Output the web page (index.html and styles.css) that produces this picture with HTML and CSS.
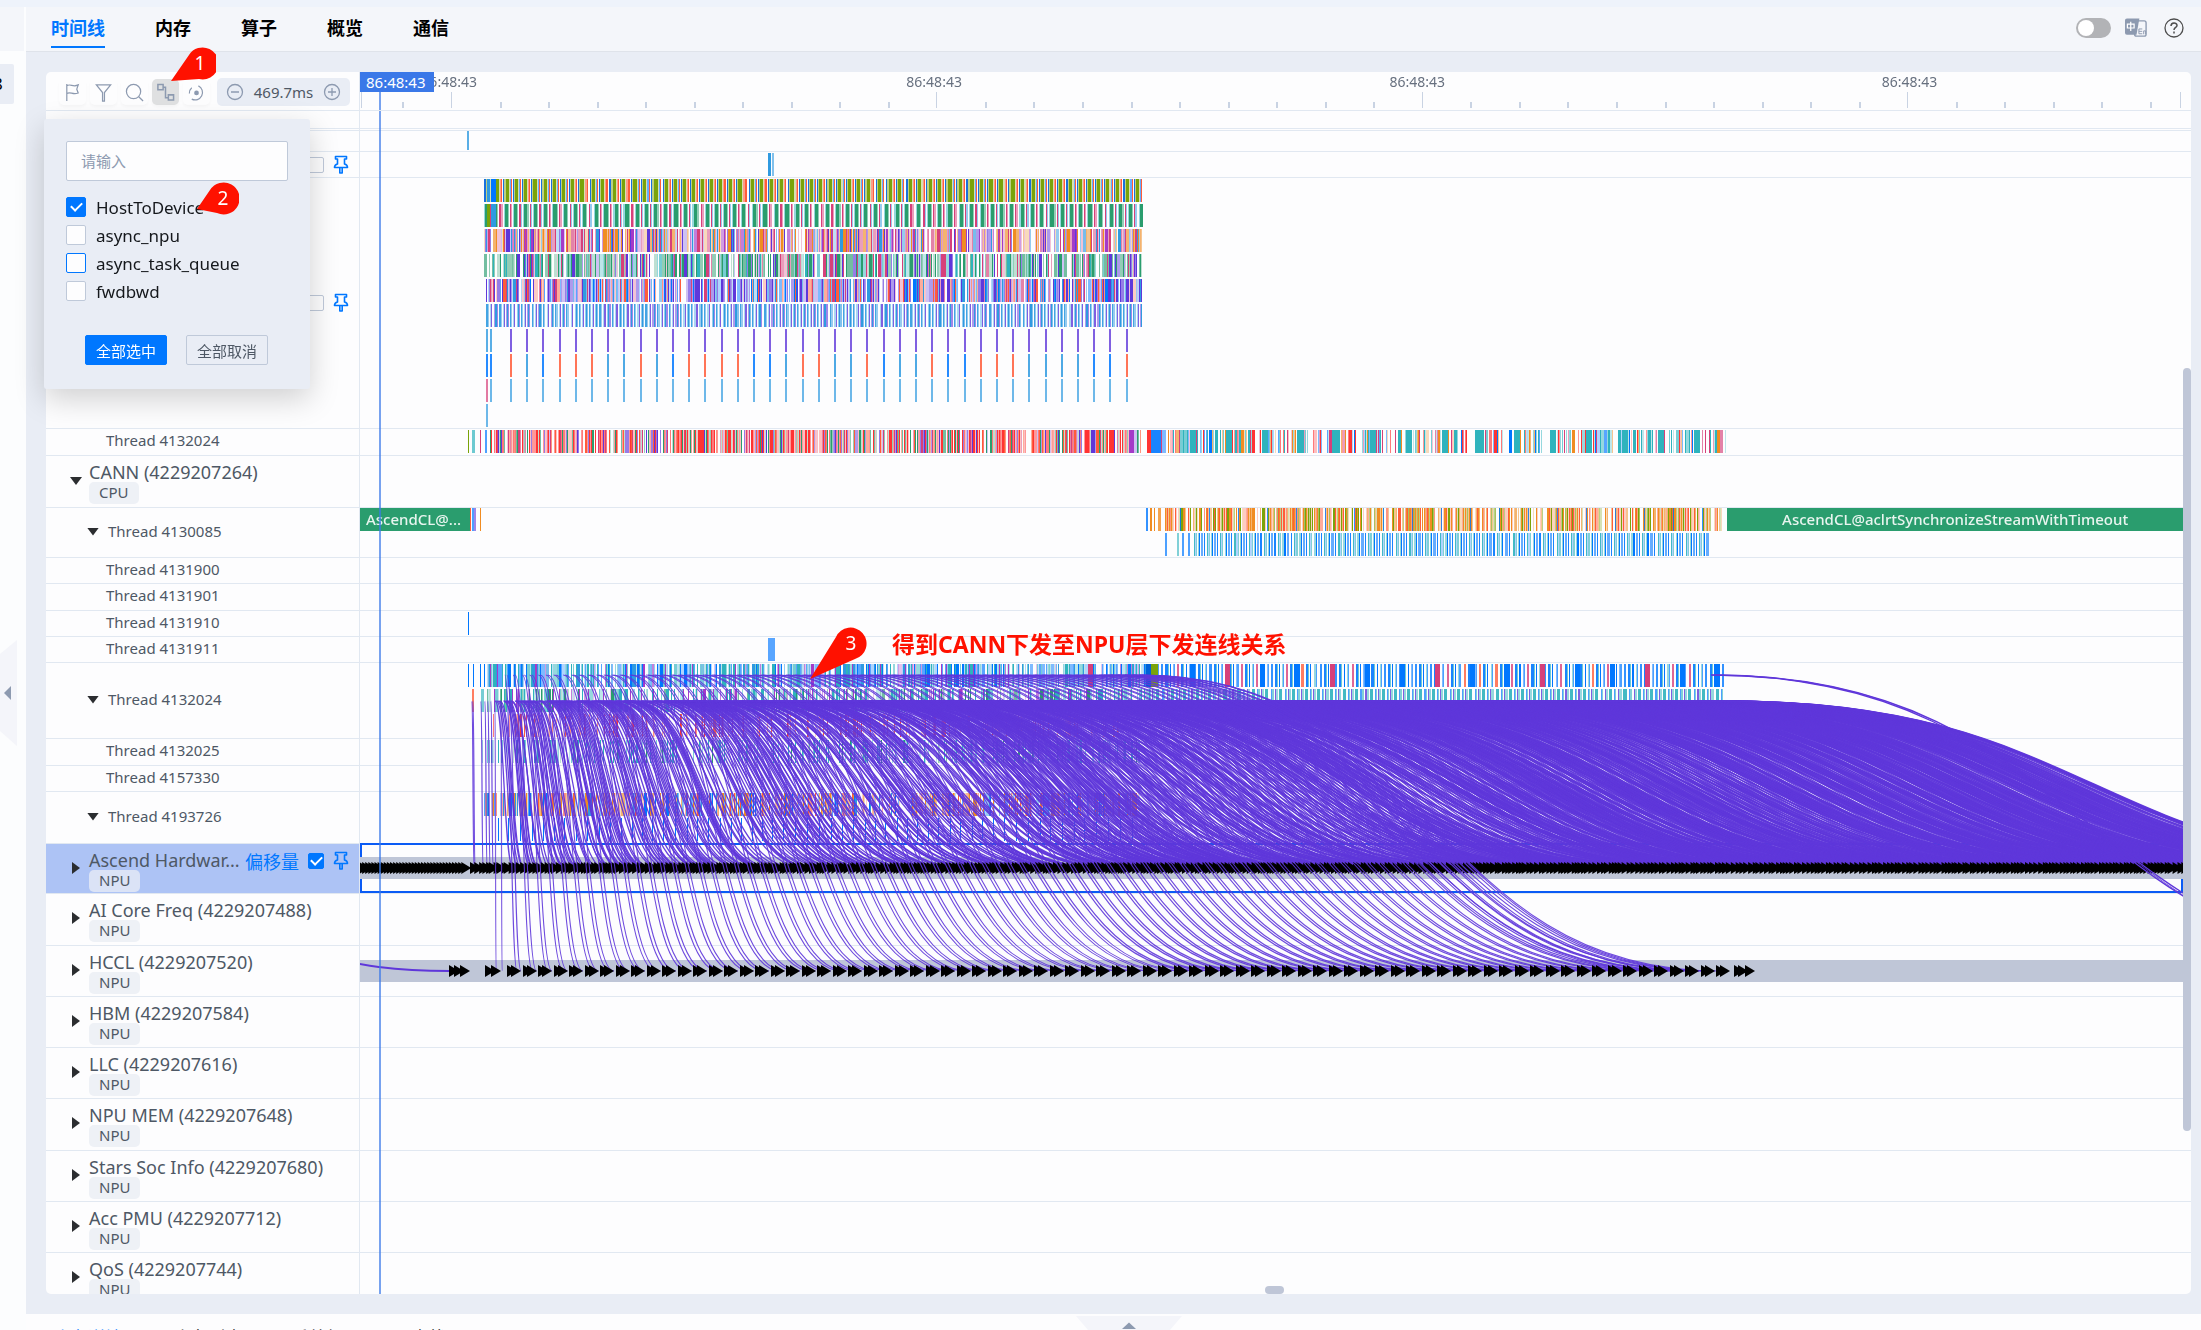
FILE: index.html
```html
<!DOCTYPE html>
<html lang="zh-CN">
<head>
<meta charset="utf-8">
<title>时间线</title>
<link rel="stylesheet" href="styles.css">
</head>
<body>
<svg width="0" height="0" class="defs" aria-hidden="true">
  <symbol id="pin" viewBox="0 0 16 20"><path d="M2.500 1.500h11v2.500h-2v5c2 .5 3 1.500 3 3.500h-13c0-2 1-3 3-3.500v-5h-2zM6.800 12.500h2.400v5.500h-2.400z" fill="none" stroke="currentColor" stroke-width="1.600" stroke-linejoin="round"/></symbol>
</svg>
<div class="app">
  <div class="strip"></div>
  <div class="shell">
    <aside class="rail">
      <div class="rail-head"></div>
      <div class="rail-item">8</div>
      <button class="rail-toggle" aria-label="collapse"><svg viewBox="0 0 17 106"><path d="M17 0v106L0 91V14z" fill="#f4f5fa"/><path d="M4 53l7-7v14z" fill="#8d9ab0"/></svg></button>
    </aside>
    <main class="main">
      <header class="topbar">
        <nav class="tabs">
          <a href="#" class="tab active">时间线</a>
          <a href="#" class="tab">内存</a>
          <a href="#" class="tab">算子</a>
          <a href="#" class="tab">概览</a>
          <a href="#" class="tab">通信</a>
        </nav>
        <div class="tools">
          <input type="checkbox" class="switch" aria-label="theme">
          <button class="icon-btn lang" aria-label="language"><svg viewBox="0 0 24 20"><rect x="10" y="2.500" width="12" height="16" rx="2" fill="#f4f6fa" stroke="#8d9ab0" stroke-width="1.400"/><path d="M2 0h13l-3 17H2a2 2 0 0 1-2-2V2a2 2 0 0 1 2-2z" fill="#8d9ab0"/><path d="M2.500 6h7v4h-7zM6 3.500v9.500" fill="none" stroke="#fff" stroke-width="1.300"/><path d="M18 11h-3.500v5H18M14.500 13.500H18M19.500 16.500v-3.500h2v3.500" fill="none" stroke="#8d9ab0"/></svg></button>
          <button class="icon-btn help" aria-label="help"><svg viewBox="0 0 20 20"><circle cx="10" cy="10" r="9" fill="none" stroke="#4e4e4e" stroke-width="1.300"/><path d="M7 8c0-4 6-4 6-.5 0 2-3 2-3 4.500M10 13.500v2" fill="none" stroke="#4e4e4e" stroke-width="1.500"/></svg></button>
        </div>
      </header>
      <section class="stage">
        <div class="panel">
          <div class="panel-head">
            <div class="toolbar">
              <button class="tool" aria-label="flag"><svg viewBox="0 0 20 20"><path d="M4 1v18M4 3c4-3 6 2 12-1l-1.500 4.500 1.500 4c-6 2.500-8-2-12 .5"/></svg></button>
              <button class="tool" aria-label="filter"><svg viewBox="0 0 20 20"><path d="M2.500 2h15L11 10v9H9v-9z"/></svg></button>
              <button class="tool" aria-label="search"><svg viewBox="0 0 20 20"><circle cx="9" cy="9" r="7.500"/><path d="M14.500 14.500l4.500 4.500"/></svg></button>
              <button class="tool on" aria-label="links"><svg viewBox="0 0 20 20"><path d="M2 1.500h5.500V7H2zM13 12.500h5.500V18H13zM7.500 4.500H10v11h3" stroke-width="1.600"/></svg></button>
              <button class="tool" aria-label="reset"><svg viewBox="0 0 20 20"><path d="M12 3a7.500 7.500 0 1 1-7 14M2.500 11A7.500 7.500 0 0 1 5 5"/><circle cx="10" cy="10.500" r="2.500" fill="#8d9ab0" stroke="none"/></svg></button>
              <div class="zoom">
                <button aria-label="zoom out"><svg viewBox="0 0 18 18"><circle cx="9" cy="9" r="7.500"/><path d="M5 9h8"/></svg></button>
                <span>469.7ms</span>
                <button aria-label="zoom in"><svg viewBox="0 0 18 18"><circle cx="9" cy="9" r="7.500"/><path d="M5 9h8M9 5v8"/></svg></button>
              </div>
            </div>
            <div class="ruler">
              <canvas id="ruler"></canvas>
              <span class="time t1">86:48:43</span>
              <span class="time t2">86:48:43</span>
              <span class="time t3">86:48:43</span>
              <span class="time t4">86:48:43</span>
              <span class="now">86:48:43</span>
            </div>
          </div>
          <div class="rows">
            <div class="row h18"><div class="cell"></div></div>
            <div class="row h2"><div class="cell"></div></div>
            <div class="row h21"><div class="cell"></div></div>
            <div class="row h26"><div class="cell"><div class="acts"><input type="checkbox" aria-label="offset"><button class="pin" aria-label="pin"><svg><use href="#pin"/></svg></button></div></div></div>
            <div class="row h251"><div class="cell"><div class="acts"><input type="checkbox" aria-label="offset"><button class="pin" aria-label="pin"><svg><use href="#pin"/></svg></button></div></div></div>
            <div class="row h27"><div class="cell thread">Thread 4132024</div></div>
            <div class="row h52"><div class="cell group"><i class="down"></i><div><div class="name">CANN (4229207264)</div><span class="tag">CPU</span></div></div></div>
            <div class="row h50"><div class="cell thread"><i class="down"></i>Thread 4130085</div></div>
            <div class="row h26"><div class="cell thread">Thread 4131900</div></div>
            <div class="row h27"><div class="cell thread">Thread 4131901</div></div>
            <div class="row h26"><div class="cell thread">Thread 4131910</div></div>
            <div class="row h26"><div class="cell thread">Thread 4131911</div></div>
            <div class="row h76"><div class="cell thread"><i class="down"></i>Thread 4132024</div></div>
            <div class="row h27"><div class="cell thread">Thread 4132025</div></div>
            <div class="row h26"><div class="cell thread">Thread 4157330</div></div>
            <div class="row h52"><div class="cell thread"><i class="down"></i>Thread 4193726</div></div>
            <div class="row h50 selected"><div class="cell group"><i class="right"></i><div><div class="name">Ascend Hardwar...</div><span class="tag">NPU</span></div><div class="acts"><a href="#" class="offset">偏移量</a><input type="checkbox" checked aria-label="offset"><button class="pin" aria-label="pin"><svg><use href="#pin"/></svg></button></div></div></div>
            <div class="row h52"><div class="cell group"><i class="right"></i><div><div class="name">AI Core Freq (4229207488)</div><span class="tag">NPU</span></div></div></div>
            <div class="row h51"><div class="cell group"><i class="right"></i><div><div class="name">HCCL (4229207520)</div><span class="tag">NPU</span></div></div></div>
            <div class="row h51"><div class="cell group"><i class="right"></i><div><div class="name">HBM (4229207584)</div><span class="tag">NPU</span></div></div></div>
            <div class="row h51"><div class="cell group"><i class="right"></i><div><div class="name">LLC (4229207616)</div><span class="tag">NPU</span></div></div></div>
            <div class="row h52"><div class="cell group"><i class="right"></i><div><div class="name">NPU MEM (4229207648)</div><span class="tag">NPU</span></div></div></div>
            <div class="row h51"><div class="cell group"><i class="right"></i><div><div class="name">Stars Soc Info (4229207680)</div><span class="tag">NPU</span></div></div></div>
            <div class="row h51"><div class="cell group"><i class="right"></i><div><div class="name">Acc PMU (4229207712)</div><span class="tag">NPU</span></div></div></div>
            <div class="row h52"><div class="cell group"><i class="right"></i><div><div class="name">QoS (4229207744)</div><span class="tag">NPU</span></div></div></div>
            <div class="trace">
              <canvas id="trace"></canvas>
              <span class="slice first">AscendCL@...</span>
              <span class="slice sync">AscendCL@aclrtSynchronizeStreamWithTimeout</span>
              <div class="cursor"></div>
            </div>
            <div class="vbar"></div>
            <div class="hbar"></div>
          </div>
        </div>
        <form class="popup">
          <input type="text" class="search" placeholder="请输入" aria-label="请输入">
          <div class="opts">
            <label><input type="checkbox" checked>HostToDevice</label>
            <label><input type="checkbox">async_npu</label>
            <label><input type="checkbox" class="focus">async_task_queue</label>
            <label><input type="checkbox">fwdbwd</label>
          </div>
          <div class="btns"><button type="button" class="primary">全部选中</button><button type="button">全部取消</button></div>
        </form>
      </section>
      <footer class="bottom">
        <a href="#" class="active">选中详情</a><a href="#">选中列表</a><a href="#">系统视图</a><a href="#">查找</a>
        <button class="expand" aria-label="expand"><svg viewBox="0 0 106 14"><path d="M0 0h106l-12 14H12z" fill="#f4f5fa"/><path d="M53 6.500l7 6.500H46z" fill="#8d9ab0"/></svg></button>
      </footer>
    </main>
  </div>
  <div class="note n1"><svg viewBox="0 0 46 36"><path d="M1 34L19 8A16 16 0 1 1 29 32z" fill="#ff1100"/></svg><b>1</b></div>
  <div class="note n2"><svg viewBox="0 0 42 33"><path d="M0 27L13 8A16 16 0 1 1 20 31z" fill="#ff1100"/></svg><b>2</b></div>
  <div class="note n3"><svg viewBox="0 0 58 54"><path d="M1 52L27 10A16 16 0 1 1 46 32z" fill="#ff1100"/></svg><b>3</b></div>
  <div class="caption">得到CANN下发至NPU层下发连线关系</div>
</div>
<script src="trace.js"></script>
</body>
</html>
```
FILE: styles.css
```css
* { box-sizing: border-box; }
body { margin: 0; font-family: "Noto Sans", "Noto Sans CJK SC", sans-serif; font-size: 15px; color: #4e5865; }
button { padding: 0; border: 0; background: none; font: inherit; color: inherit; }
a { color: inherit; text-decoration: none; }
.defs { position: absolute; }
.app { position: relative; display: flex; flex-direction: column; height: 100vh; overflow: hidden; }
.strip { flex: none; height: 7px; background: #eef3fb; }
.shell { display: flex; flex: 1; min-height: 0; }

.rail { position: relative; flex: none; width: 26px; background: #fcfdfe; }
.rail-head { width: 24px; height: 44px; background: #f4f6fa; }
.rail-item { width: 14px; height: 40px; margin-top: 13px; border-radius: 0 2px 2px 0; background: #e9edf5; color: #000; line-height: 40px; font-size: 17px; text-indent: -7px; overflow: hidden; }
.rail-toggle { position: absolute; left: 0; top: 633px; width: 17px; height: 106px; }
.rail-toggle svg, .expand svg { display: block; width: 100%; height: 100%; }

.main { display: flex; flex-direction: column; flex: 1; min-width: 0; }
.topbar { display: flex; justify-content: space-between; flex: none; height: 45px; padding: 0 17px 0 25px; background: #f4f6fa; border-bottom: 1px solid #dfe3ea; }
.tabs { display: flex; gap: 50px; }
.tab { height: 41px; padding-top: 6px; color: #000; font-size: 18px; line-height: 30px; font-weight: 700; }
.tab.active { color: #0077ff; border-bottom: 2px solid #0077ff; }
.tools { display: flex; align-items: center; padding-bottom: 2px; }
.switch { appearance: none; width: 35px; height: 20px; margin: 0 14px 0 0; border-radius: 10px; background: #b2b3b6; }
.switch::before { content: ""; display: block; width: 16px; height: 16px; margin: 2px; border-radius: 50%; background: #fff; }
.icon-btn svg { display: block; height: 20px; }
.lang svg { width: 23px; }
.help { margin-left: 16px; }
.help svg { width: 20px; }

.stage { position: relative; flex: 1; min-height: 0; padding: 20px 10px 20px 20px; background: #e9edf5; }
.panel { display: flex; flex-direction: column; height: 100%; border-radius: 5px; background: #fdfdfe; overflow: hidden; }
.panel-head { display: flex; flex: none; height: 39px; padding-right: 8px; border-bottom: 1px solid #e1e8f1; }
.toolbar { display: flex; align-items: center; flex: none; gap: 4px; width: 314px; padding: 2px 9px 0 13px; border-right: 1px solid #e1e8f1; }
.toolbar svg { display: block; fill: none; stroke: #8d9ab0; stroke-width: 1.300; }
.tool { display: grid; place-items: center; width: 27px; height: 26px; border-radius: 5px; box-shadow: 0 2px 3px #00000008; }
.tool svg { width: 19px; height: 19px; }
.tool.on { background: #dfe0e1; }
.zoom { display: flex; align-items: center; justify-content: space-between; flex: 1; height: 28px; margin-left: 3px; padding: 0 9px; border-radius: 5px; background: #e9edf5; color: #4e5865; }
.zoom svg { width: 18px; height: 18px; }
.ruler { position: relative; flex: 1; }
.ruler canvas { position: absolute; left: 0; top: 0; }
.time { position: absolute; top: 0; line-height: 20px; font-size: 14px; color: #67707f; transform: translateX(-50%); }
.t1 { left: calc(5% - 2px); } .t2 { left: calc(31% + 9px); } .t3 { left: 58%; } .t4 { left: 85%; }
.now { position: absolute; left: 0; top: 0; width: 74px; height: 20px; background: #3a78e8; color: #fff; line-height: 20px; padding-left: 6px; }

.rows { position: relative; flex: 1; min-height: 0; overflow: hidden; }
.row { border-bottom: 1px solid #e1e8f1; }
.h2 { height: 2px; } .h18 { height: 18px; } .h21 { height: 21px; } .h26 { height: 26px; } .h27 { height: 27px; }
.h50 { height: 50px; } .h51 { height: 51px; } .h52 { height: 52px; } .h76 { height: 76px; } .h251 { height: 251px; }
.cell { position: relative; display: flex; align-items: center; width: 314px; height: 100%; border-right: 1px solid #e1e8f1; }
.thread { padding: 0 0 4px 60px; }
.thread .down { margin: 2px 9px 0 -19px; }
.group { align-items: flex-start; padding-left: 24px; }
.group > div:first-of-type { padding-top: 6px; }
.name { line-height: 20px; font-size: 18px; white-space: nowrap; }
.tag { display: block; width: fit-content; height: 22px; padding: 0 10px; border-radius: 5px; background: #eef1f6; line-height: 21px; }
.down { width: 12px; height: 8px; background: #2b2d30; clip-path: polygon(0 0, 100% 0, 50% 100%); }
.right { width: 8px; height: 12px; background: #2b2d30; clip-path: polygon(0 0, 100% 50%, 0 100%); }
.group .down { margin: 21px 7px 0 0; }
.group .right { flex: none; margin: 18px 9px 0 2px; }
.selected .cell { background: #adc3f5; }
.selected .tag { background: #dbe3f6; }
.acts { display: flex; align-items: center; gap: 9px; margin-left: auto; padding-right: 10px; color: #0077ff; }
.group .acts { height: 34px; }
.offset { color: #0077ff; font-size: 18px; }
.pin { width: 16px; height: 20px; }
.pin svg { display: block; width: 16px; height: 20px; }
input[type=checkbox]:not(.switch) { appearance: none; flex: none; width: 16px; height: 16px; margin: 0; border: 1px solid #bfc9d9; border-radius: 2px; background: #fdfdfe; }
input[type=checkbox]:not(.switch):checked { border-color: #0077ff; background: #0077ff; display: grid; place-items: center; }
input[type=checkbox]:not(.switch):checked::before { content: ""; width: 9px; height: 5px; margin-bottom: 3px; border: solid #fff; border-width: 0 0 2px 2px; rotate: -45deg; }

.trace { position: absolute; left: 314px; right: 8px; top: 0; bottom: 0; overflow: hidden; }
.trace canvas { position: absolute; left: 0; top: 0; }
.slice { position: absolute; top: 397px; height: 23px; line-height: 22px; color: #e8f5ef; font-weight: 500; text-align: center; white-space: nowrap; }
.first { left: 6px; }
.sync { left: 75%; right: 0; }
.cursor { position: absolute; left: 19px; top: 0; bottom: 0; width: 2px; background: #3a78e8b0; }
.panel-head .cursor-top { height: 18px; }
.vbar { position: absolute; right: 0; top: 257px; width: 8px; height: 763px; border-radius: 4px; background: #bfc6d7; }
.hbar { position: absolute; left: 57%; bottom: 0; width: 19px; height: 8px; margin-left: -4px; border-radius: 4px; background: #bfc6d7; }

.popup { position: absolute; left: 18px; top: 67px; width: 266px; height: 270px; padding: 22px; border-radius: 3px; background: #e9edf5; box-shadow: 0 10px 30px #0000002e; }
.search { display: block; width: 222px; height: 40px; padding: 0 14px; border: 1px solid #bfc9d9; border-radius: 2px; background: #fdfdfe; font: inherit; }
.search::placeholder { color: #8d9ab0; }
.opts { display: grid; grid-auto-rows: 28px; margin-top: 12px; }
.opts label { display: flex; align-items: center; gap: 10px; color: #15181c; font-size: 17px; }
.opts label input[type=checkbox] { width: 20px !important; height: 20px !important; }
.opts .focus { border-color: #0077ff !important; }
.btns { display: flex; gap: 19px; margin: 30px 0 0 19px; }
.btns button { width: 82px; height: 30px; border: 1px solid #bfc9d9; border-radius: 2px; }
.btns .primary { border-color: #0077ff; background: #0077ff; color: #fff; }

.bottom { position: relative; display: flex; gap: 48px; flex: none; height: 16px; padding: 13px 25px 0; background: #fdfdfe; color: #000; font-size: 18px; line-height: 22px; overflow: hidden; }
.bottom .active { color: #0077ff; }
.expand { position: absolute; left: 50%; bottom: 0; width: 106px; height: 14px; margin-left: -38px; }

.note { position: absolute; }
.note svg { display: block; width: 100%; height: 100%; }
.note b { position: absolute; right: 0; top: 0; width: 32px; line-height: 32px; text-align: center; color: #fff; font-size: 19px; font-weight: 400; }
.n1 { left: 170px; top: 47px; width: 46px; height: 36px; }
.n2 { left: 197px; top: 182px; width: 42px; height: 33px; }
.n3 { left: 809px; top: 627px; width: 58px; height: 54px; }
.caption { position: absolute; left: 892px; top: 627px; color: #ff1100; font-size: 23px; line-height: 34px; font-weight: 700; white-space: nowrap; }
```
FILE: trace.js
```js
const BLUE = '#0077ff', SKY = '#2f9ae0', CORAL = '#ff5c3a', OLIVE = '#7aa30a', GREEN = '#2a9d6e',
  PINK = '#d6407a', ORANGE = '#f08c22', VIOLET = '#5f37da', MAGENTA = '#a43bc8', TEAL = '#2fb3bd',
  RED = '#ff3333', NAVY = '#0060d8';
const WIDTH = 1823;
let seed = 7;
const rnd = () => (seed = (seed * 16807) % 2147483647) / 2147483647;
const pick = list => list[Math.floor(rnd() * list.length)];

function setup(id) {
  const canvas = document.getElementById(id);
  const box = canvas.parentElement;
  canvas.width = box.clientWidth;
  canvas.height = box.clientHeight;
  const ctx = canvas.getContext('2d');
  ctx.scale(box.clientWidth / WIDTH, 1);
  return ctx;
}

// Ruler ticks: a long one every ten short steps
const r = setup('ruler');
r.fillStyle = '#c9d3e3';
r.fillRect(1, 20, 1, 16);
r.fillRect(1820, 20, 1, 16);
for (let i = -1; i < 36; i++) {
  const x = Math.round(91 + i * 48.54), long = i % 10 === 0;
  r.fillRect(x, long ? 20 : 30, long ? 1 : 2, long ? 16 : 6);
}
r.fillStyle = '#3a78e8b0';
r.fillRect(19, 20, 2, 18);

const c = setup('trace');
function bar(x, y, w, color, alpha = 1) {
  c.globalAlpha = alpha;
  c.fillStyle = color;
  c.fillRect(x, y, w, 23);
  c.globalAlpha = 1;
}
// gap: share of blank slots, wide: share of wider slices
function lane(y, from, to, colors, gap, wide = 0.1) {
  let x = from;
  while (x < to) {
    if (rnd() < gap) { x += 1 + (rnd() < 0.4 ? 1 : 0); continue; }
    const w = rnd() < wide ? 3 : 1;
    bar(x, y, w, pick(colors), pick([1, 1, 0.65, 0.5, 0.3]));
    x += w;
  }
}
// repeated motif: [colour, width, alpha] entries, null is blank
function motif(y, from, to, makers) {
  let x = from;
  while (x < to) for (const [color, w, alpha] of makers) {
    if (x >= to) break;
    const jitter = rnd() < 0.12 ? 1 : 0;
    if (color) bar(x, y, w + jitter, Array.isArray(color) ? pick(color) : color, alpha);
    x += w + jitter;
  }
}

bar(107, 20, 2, SKY, 0.8);
c.clearRect(100, 39, 20, 5);
bar(408, 42, 3, SKY); bar(412, 42, 2, SKY, 0.6);

motif(68, 124, 782, [[NAVY, 1, .9], [OLIVE, 1, .5], [OLIVE, 3, 1], [OLIVE, 1, .3], [[CORAL, BLUE], 1, .6], [CORAL, 1, 1], [null, 1]]);
bar(127, 68, 3, SKY); bar(131, 68, 5, BLUE);
motif(93, 124, 782, [[TEAL, 1, .5], [GREEN, 3, 1], [GREEN, 1, .5], [null, 1], [PINK, 1, 1], [[PINK, SKY], 1, .5], [null, 1]]);
bar(127, 93, 3, OLIVE); bar(131, 93, 5, SKY);
lane(118, 124, 782, [ORANGE, ORANGE, PINK, VIOLET, MAGENTA, SKY, PINK], .1);
lane(143, 124, 782, [GREEN, GREEN, GREEN, VIOLET, PINK, TEAL], .14, .12);
lane(168, 126, 782, [VIOLET, VIOLET, CORAL, PINK, SKY, BLUE, VIOLET], .12);
motif(193, 126, 782, [[SKY, 1, .9], [SKY, 1, .5], [null, 1], [SKY, 1, .4], [VIOLET, 1, .8], [null, 1], [[SKY, VIOLET], 1, .5], [SKY, 1, 1], [[SKY, VIOLET], 1, .6], [null, 1]]);
for (let i = 0, x = 126; x < 782; i++, x = i === 1 ? 130 : 150 + Math.round((i - 2) * 16.2)) {
  bar(x, 218, 2, i < 2 ? SKY : VIOLET, .8);
  bar(x, 243, 2, i < 2 ? BLUE : pick([CORAL, CORAL, BLUE, SKY]), .85);
  bar(x, 268, 2, i ? SKY : PINK, .7);
}
bar(126, 293, 2, SKY, .7);

bar(108, 319, 1, OLIVE); bar(112, 319, 3, TEAL, .7); bar(120, 319, 1, PINK); bar(125, 319, 2, BLUE, .7);
lane(319, 130, 782, [RED, RED, PINK, GREEN, RED, CORAL, VIOLET, GREEN], .1, .04);
bar(731, 319, 4, VIOLET); bar(749, 319, 4, RED); bar(769, 319, 5, MAGENTA); bar(787, 319, 4, RED);
bar(791, 319, 10, BLUE, .9);
lane(319, 801, 1366, [TEAL, TEAL, PINK, BLUE, RED, ORANGE], .28, .1);
for (let x = 830, i = 0; x < 1360; x += 36, i++) { bar(x, 319, 6, TEAL); if (i % 3 === 0) bar(x + 37, 319, 4, VIOLET); }

bar(0, 397, 110, GREEN); bar(110, 397, 1, CORAL); bar(112, 397, 2, BLUE, .7); bar(114, 397, 2, VIOLET, .6); bar(120, 397, 1, ORANGE);
bar(786, 397, 2, BLUE, .8); bar(790, 397, 2, ORANGE); bar(794, 397, 1, ORANGE); bar(798, 397, 3, ORANGE, .8);
lane(397, 805, 1362, [ORANGE, ORANGE, CORAL, CORAL, OLIVE, ORANGE, OLIVE], .2, .02);
for (let x = 820; x < 1362; x += 29) bar(x, 397, 1, BLUE, .8);
bar(1367, 397, 456, GREEN);
bar(805, 422, 2, BLUE, .7); bar(817, 422, 2, TEAL, .6); bar(822, 422, 2, BLUE, .7); bar(828, 422, 2, BLUE, .7);
motif(422, 834, 1350, [[TEAL, 1, .9], [BLUE, 1, .3], [TEAL, 1, .6], [null, 1], [TEAL, 1, .5], [BLUE, 1, 1], [null, 1], [BLUE, 2, .6], [null, 1], [BLUE, 1, .9], [null, 2]]);

bar(108, 501, 1, BLUE);
bar(408, 527, 7, BLUE, .65);

for (const x of [108, 113, 120, 124]) bar(x, 553, 1, BLUE);
lane(553, 127, 790, [BLUE, TEAL, SKY, TEAL, MAGENTA, BLUE], .16, .1);
bar(728, 553, 5, PINK); bar(786, 553, 5, NAVY); bar(791, 553, 7, OLIVE);
motif(553, 798, 1366, [[BLUE, 1, .7], [null, 2], [[CORAL, PINK, BLUE], 2, .8], [null, 2], [BLUE, 2, .9], [TEAL, 1, .7], [null, 1], [BLUE, 1, 1], [null, 2], [[BLUE, TEAL], 1, .5]]);
for (let x = 830, i = 0; x < 1366; x += 35, i++) bar(x, 553, 5, i % 3 === 1 ? PINK : BLUE);
bar(112, 578, 2, CORAL, .8);
lane(578, 121, 790, [TEAL, TEAL, MAGENTA, GREEN, TEAL], .3);
motif(578, 790, 1364, [[TEAL, 1, .6], [null, 1], [VIOLET, 1, .8], [TEAL, 2, .5], [null, 1], [TEAL, 3, .9], [null, 2], [BLUE, 1, .7]]);
lane(603, 133, 760, [CORAL, PINK, CORAL, RED], .65, .05);
lane(629, 120, 780, [TEAL, TEAL, TEAL, GREEN], .55, .02);
lane(682, 124, 782, [ORANGE, CORAL, BLUE, ORANGE, SKY], .25, .05);
for (let x = 138; x < 782; x += 10 + Math.floor(rnd() * 3)) bar(x, 707, 1, BLUE);

// Selected track frame, then the collapsed bands
c.strokeStyle = '#0a5bf5';
c.lineWidth = 2;
c.strokeRect(1, 733, 1821, 48);
c.fillStyle = '#bfc6d7';
c.fillRect(0, 746, WIDTH, 22);
c.fillRect(0, 849, WIDTH, 22);

function link(x1, y1, x2, y2, alpha = .9, w = 1.2) {
  c.globalAlpha = alpha;
  c.strokeStyle = VIOLET;
  c.lineWidth = w;
  c.beginPath();
  c.moveTo(x1, y1);
  const m = (x1 + x2) / 2;
  c.bezierCurveTo(m, y1, m, y2, x2, y2);
  c.stroke();
  c.globalAlpha = 1;
}
function arrow(x, y) {
  c.fillStyle = '#000';
  c.beginPath();
  c.moveTo(x, y);
  c.lineTo(x - 10, y - 6);
  c.lineTo(x - 10, y + 6);
  c.fill();
}
const target = s => s < 782 ? 115 + (s - 115) * 1.88 : 1370 + (s - 782) * 1.25;

for (const s of [112, 113, 121, 125, 128, 131]) link(s, 590, s + 2, 757, .9);
for (let s = 135; s < 1368;) {
  link(s, 590, target(s) + rnd() * 6, 757, .95, s > 782 ? 1.5 : 1.3);
  s += rnd() < .12 ? 3.5 : s < 782 ? .6 + rnd() * 1.1 : .5 + rnd() * 1.1;
}
for (let s = 500; s < 1368; s += 3) link(s, 590, s + 700 * (s / 1371), 757, .9);
for (let x = 9; x < 112; x += 3.1) arrow(x, 757);
for (let x = 120; x < WIDTH + 10; x += 2.6 + rnd() * 2.4) arrow(x, 757);

link(-150, 834, 90, 860, 1, 2);
link(135, 590, 136, 860, .8); link(141, 590, 142, 860, .8);
// Launches reach the communication track in pairs
for (let p = 0; ; p++) {
  const t = 157 + p * 15.5;
  if (t > 1352) break;
  const s = 144 + (t - 157) * .532 + rnd() * 2;
  link(s, 564, t, 860, .9, 1.1);
  link(s + 2, 564, t + 4, 860, .9, 1.1);
}
for (let s = 744; s < 786; s += 7) link(s, 564, 1300 + (s - 744) * 1.7, 860, .9);
link(1351, 564, 2096, 860, 1, 1.3); link(1354, 564, 2102, 860, 1, 1.3); link(1352, 564, 2112, 868, .8, 1);

for (const x of [99, 104, 110, 135, 141]) arrow(x, 860);
for (let p = 0, x = 157; x < 1376; p++, x = 157 + Math.round(p * 15.5)) { arrow(x, 860); arrow(x + 4, 860); }
for (const x of [1384, 1388, 1395]) arrow(x, 860);
```
